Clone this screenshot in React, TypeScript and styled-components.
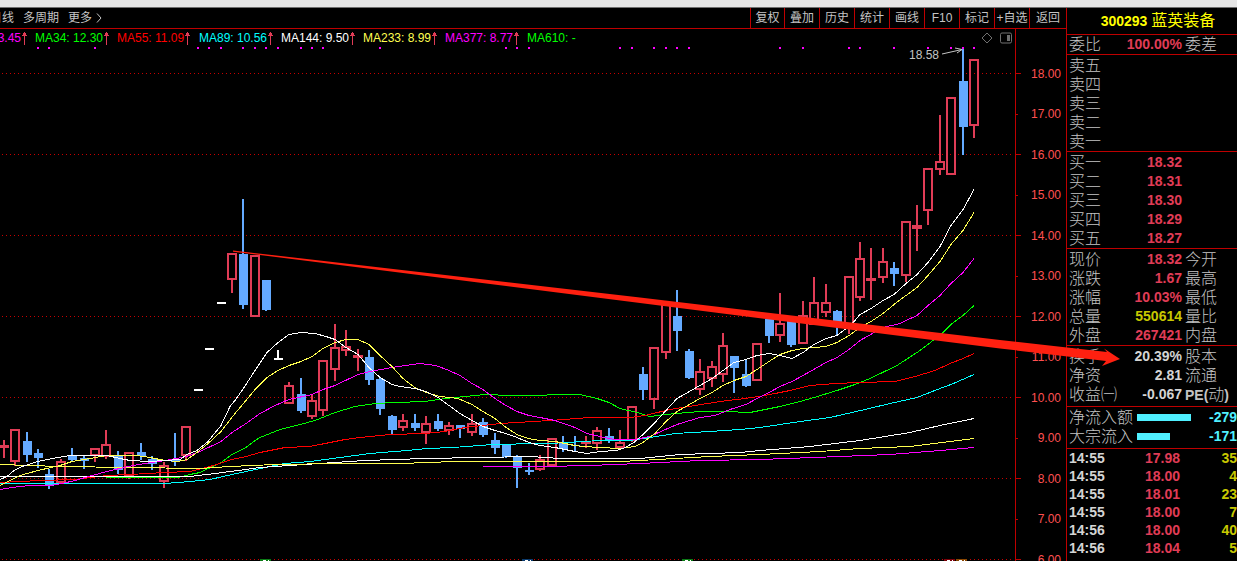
import React from "react";
import styled, { createGlobalStyle } from "styled-components";

const LINE = "#be0000";
const UP = "#e03c56";
const DOWN = "#64aaff";
const LABEL = "#c4c4c4";

const GlobalStyle = createGlobalStyle`
  *, *::before, *::after { box-sizing: border-box; }
  body {
    margin: 0;
    background: #000;
    font-family: "Liberation Sans", "Noto Sans CJK SC", sans-serif;
  }
`;

const Page = styled.div`
  position: relative;
  display: flex;
  flex-direction: column;
  height: 100vh;
  overflow: hidden;
  background: #000;
  color: ${LABEL};
`;

const TitleStrip = styled.div`
  flex: none;
  height: 8px;
  background: #e6e6e6;
  border-bottom: 1px solid #707070;
`;

const Workspace = styled.div`
  flex: 1;
  display: flex;
  min-height: 0;
`;

const ChartArea = styled.main`
  flex: 1;
  min-width: 0;
  display: flex;
  flex-direction: column;
`;

const Toolbar = styled.header`
  flex: none;
  display: flex;
  justify-content: space-between;
  height: 21px;
  border-bottom: 1px solid ${LINE};
  overflow: hidden;
`;

const Periods = styled.nav`
  display: flex;
  align-items: center;
  gap: 9px;
  margin-left: -10px;
`;

const PeriodButton = styled.button`
  display: flex;
  align-items: center;
  gap: 4px;
  padding: 0;
  border: 0;
  background: none;
  color: ${LABEL};
  font: 12px/20px "Liberation Sans", "Noto Sans CJK SC", sans-serif;
  white-space: nowrap;
`;

const Tools = styled.div`
  display: flex;
`;

const ToolButton = styled.button`
  width: 35px;
  padding: 0;
  border: 0;
  border-left: 1px solid ${LINE};
  background: none;
  color: ${LABEL};
  font: 12px/20px "Liberation Sans", "Noto Sans CJK SC", sans-serif;
  white-space: nowrap;

  &:first-child { width: 34px; }
  &:last-child { width: 37px; }
`;

const ChartBody = styled.div`
  flex: 1;
  display: flex;
  min-height: 0;
`;

const Plot = styled.section`
  flex: 1;
  min-width: 0;
  display: flex;
  flex-direction: column;
  overflow: hidden;
`;

const LegendBar = styled.div`
  flex: none;
  display: flex;
  align-items: center;
  justify-content: space-between;
  height: 17px;
  padding-right: 3px;
`;

const Legend = styled.ul`
  display: grid;
  grid-auto-flow: column;
  grid-auto-columns: 82px;
  margin: 0 0 0 -47px;
  padding: 2px 0 0;
  list-style: none;
`;

const LegendItem = styled.li<{ $color: string }>`
  display: flex;
  align-items: center;
  gap: 1px;
  color: ${(p) => p.$color};
  font-size: 12px;
  line-height: 15px;
  white-space: nowrap;
`;

const ViewIcons = styled.div`
  display: flex;
  align-items: center;
  gap: 7px;
`;

const Candles = styled.svg`
  flex: none;
  display: block;
  width: 100%;
  height: 515px;
`;

const Axis = styled.ol`
  flex: none;
  width: 51px;
  margin: 0;
  padding: 24px 5px 0 0;
  border-left: 1px solid ${LINE};
  list-style: none;
  overflow: hidden;
`;

const AxisStep = styled.li<{ $major: boolean }>`
  display: flex;
  align-items: center;
  justify-content: space-between;
  height: ${(p) => (p.$major ? 41 : 40)}px;
  color: #ff5050;
  font-size: 12px;
  line-height: 16px;

  &::before {
    content: "";
    width: ${(p) => (p.$major ? 5 : 2)}px;
    height: 1px;
    background: ${LINE};
  }
`;

const SidePanel = styled.aside`
  flex: none;
  width: 171px;
  border-left: 1px solid ${LINE};
  overflow: hidden;
`;

const StockTitle = styled.h1`
  display: flex;
  align-items: baseline;
  justify-content: center;
  gap: 4px;
  height: 27px;
  margin: 0;
  padding-left: 12px;
  border-bottom: 1px solid ${LINE};
  color: #ffff00;
  font-size: 16px;
  font-weight: 400;
  line-height: 26px;
`;

const StockCode = styled.span`
  font-size: 14px;
  font-weight: 700;
`;

const Section = styled.section<{ $top?: number; $bottom?: number }>`
  padding: ${(p) => p.$top ?? 1}px 0 ${(p) => p.$bottom ?? 0}px 2px;
  border-bottom: 1px solid ${LINE};

  &:last-child { border-bottom: 0; }
`;

const DataTable = styled.table`
  width: 100%;
  table-layout: fixed;
  border-collapse: collapse;
`;

const Row = styled.tr<{ $height?: number }>`
  height: ${(p) => p.$height ?? 19}px;
  line-height: ${(p) => p.$height ?? 19}px;
`;

const NameCell = styled.th<{ $width?: number }>`
  width: ${(p) => (p.$width ? `${p.$width}px` : "auto")};
  padding: 0;
  font-size: 16px;
  font-weight: 300;
  text-align: left;
  white-space: nowrap;
`;

const ValueCell = styled.td<{ $color: string; $width?: number; $align?: string }>`
  width: ${(p) => (p.$width ? `${p.$width}px` : "auto")};
  padding: 0;
  color: ${(p) => p.$color};
  font-size: 14px;
  font-weight: 700;
  text-align: ${(p) => p.$align ?? "right"};
  white-space: nowrap;
`;

const PairCell = styled(NameCell)`
  padding-left: 3px;
`;

const Latin = styled.span`
  font-size: 14px;
  font-weight: 700;
  line-height: 14px;
`;

const BarCell = styled.td`
  padding: 0;
`;

const FlowBar = styled.div`
  height: 7px;
  background: #50f0ff;
`;

const Annotation = styled.svg`
  position: absolute;
  top: 0;
  right: 0;
  width: 1237px;
  height: 561px;
  pointer-events: none;
`;

/* centre x, direction, high, body top, body bottom, low */
type Candle = [number, "u" | "d", number, number, number, number];

const candles: Candle[] = [
  [4, "u", 440, 445, 448, 458], [15, "u", 429, 429, 462, 466], [27, "d", 432, 441, 455, 462],
  [38, "d", 449, 453, 458, 468], [49, "d", 469, 474, 486, 489], [61, "u", 459, 461, 483, 483],
  [72, "d", 448, 456, 460, 462], [84, "d", 456, 458, 461, 469], [95, "u", 448, 448, 456, 462],
  [106, "u", 430, 444, 457, 459], [118, "d", 451, 456, 470, 474], [129, "u", 452, 452, 476, 479],
  [141, "d", 443, 452, 456, 460], [152, "d", 456, 459, 464, 470], [164, "u", 462, 465, 482, 488],
  [175, "d", 433, 460, 462, 466], [186, "u", 426, 426, 456, 461], [232, "u", 253, 253, 280, 293],
  [243, "d", 199, 254, 305, 309], [255, "u", 255, 255, 317, 317], [266, "d", 280, 280, 310, 311],
  [289, "u", 382, 385, 404, 404], [301, "d", 378, 394, 411, 413], [312, "u", 394, 400, 417, 419],
  [323, "u", 360, 360, 411, 416], [335, "u", 324, 347, 370, 381], [346, "u", 330, 346, 351, 356],
  [358, "u", 349, 355, 358, 371], [369, "d", 350, 357, 380, 385], [380, "d", 377, 379, 409, 415],
  [392, "d", 415, 416, 430, 434], [403, "u", 414, 420, 428, 431], [415, "d", 414, 423, 428, 431],
  [426, "u", 416, 423, 433, 444], [438, "d", 414, 421, 429, 431], [449, "u", 422, 425, 431, 435],
  [460, "d", 425, 425, 429, 438], [472, "u", 414, 423, 433, 436], [483, "d", 418, 422, 435, 437],
  [495, "d", 433, 440, 448, 454], [506, "d", 444, 444, 457, 458], [517, "d", 455, 456, 468, 488],
  [529, "d", 463, 470, 472, 475], [540, "u", 455, 459, 470, 471], [552, "u", 438, 438, 466, 466],
  [563, "d", 436, 442, 449, 452], [575, "d", 436, 445, 446, 451], [586, "u", 436, 441, 444, 448],
  [597, "u", 427, 430, 444, 450], [609, "d", 428, 436, 440, 443], [620, "u", 430, 442, 448, 449],
  [632, "u", 406, 406, 441, 442], [643, "d", 367, 374, 390, 400], [654, "u", 347, 347, 400, 409],
  [666, "u", 304, 304, 353, 359], [677, "d", 290, 316, 331, 351], [689, "d", 349, 351, 378, 379],
  [700, "u", 359, 371, 390, 395], [712, "u", 361, 366, 379, 387], [723, "u", 333, 345, 375, 382],
  [734, "d", 356, 356, 368, 393], [746, "d", 359, 374, 386, 387], [757, "u", 343, 343, 381, 381],
  [769, "d", 319, 319, 336, 343], [780, "u", 293, 323, 336, 342], [791, "d", 320, 320, 345, 347],
  [803, "u", 301, 315, 344, 344], [814, "u", 277, 302, 325, 325], [826, "u", 284, 302, 313, 317],
  [837, "d", 310, 311, 324, 335], [849, "u", 276, 276, 328, 334], [860, "u", 242, 258, 298, 301],
  [871, "u", 248, 278, 281, 300], [883, "u", 248, 261, 278, 283], [894, "d", 262, 268, 274, 286],
  [906, "u", 221, 221, 276, 282], [917, "u", 205, 225, 229, 251], [928, "u", 168, 168, 211, 225],
  [940, "u", 115, 161, 170, 175], [951, "u", 97, 97, 175, 175], [963, "d", 49, 81, 127, 155],
  [974, "u", 59, 59, 126, 138],
];

const averages: { color: string; points: string }[] = [
  { color: "#00ff00", points: "20,476 50,476 160,477 178,477 190,474 200,472 221,462 232,454 246,447 255,440 260,437 280,429 300,424 315,420 335,412 355,406 375,403 395,402 425,401 445,398 465,396 485,394 510,395 540,395 555,394 580,394 597,398 609,402 620,408 637,412 650,416 665,414 700,411 725,411 750,412 760,410 780,406 800,401 814,397 837,390 855,384 870,378 897,365 920,350 942,333 951,324 963,315 974,305" },
  { color: "#ff0000", points: "0,482 40,480 75,479 107,475 130,474 165,472 190,471 210,466 232,459 246,456 260,452 285,447 310,446 325,443 345,439 360,437 390,434 425,433 445,431 465,427 500,423 550,420 590,417 630,417 645,415 670,409 695,405 720,401 745,398 765,395 790,390 810,385 835,383 860,382 895,381 915,376 935,370 950,363 963,358 974,353" },
  { color: "#00ffff", points: "0,483 165,483 190,481 210,479 232,474 260,468 285,463 310,461 340,457 370,453 407,450 427,448 453,447 493,444 540,443 550,443 600,440 630,440 650,437 675,433 710,431 740,429 760,427 800,421 830,417 865,409 890,403 917,397 940,388 951,384 974,374" },
  { color: "#ffffff", points: "0,476 190,476 215,473 230,471 246,469 260,467 320,463 365,460 425,458 480,457 530,456 560,458 640,458 680,454 740,452 760,450 810,446 860,440 910,432 940,425 974,418" },
  { color: "#ffff50", points: "0,464 60,466 130,467 200,468 230,466 275,464 340,463 400,463 455,461 530,461 620,461 640,460 710,456 760,454 820,451 860,448 910,446 974,438" },
  { color: "#ff00ff", points: "483,466 545,466 590,465 640,463 700,460 760,459 840,456 890,454 940,450 974,447" },
  { color: "#ff00ff", points: "0,489 12,487 30,485 50,485 62,483 75,480 92,475 107,471 128,466 145,463 165,460 187,456 200,451 221,441 232,432 246,423 260,413 275,405 289,399 312,394 323,389 335,385 358,374 370,371 392,367 420,363 436,365 449,370 460,375 472,383 483,389 495,398 506,405 517,411 529,415 540,417 555,420 575,427 587,433 600,436 614,439 635,439 650,436 663,430 677,424 690,420 700,417 715,415 730,409 746,404 757,398 769,392 780,386 792,381 803,375 826,362 837,357 849,349 860,340 883,327 900,323 906,320 917,315 928,305 940,295 951,283 963,272 974,258" },
  { color: "#ffff50", points: "0,485 10,480 20,475 38,470 60,465 72,461 90,458 107,455 137,455 150,457 165,460 178,461 187,459 197,452 208,443 221,431 235,413 246,400 255,389 267,377 278,370 289,365 301,361 312,356 323,348 335,342 346,339 358,339 369,344 380,355 392,366 403,378 415,387 426,392 440,396 458,398 472,404 483,411 495,418 506,427 517,434 528,438 540,440 555,441 575,445 583,446 600,447 620,448 635,446 643,442 655,433 666,421 677,411 700,398 712,392 723,385 734,380 746,376 757,369 769,361 780,354 792,350 803,348 814,347 826,346 837,342 849,335 860,327 871,321 883,313 894,304 906,295 917,287 928,275 940,261 951,244 963,230 974,212" },
  { color: "#ffffff", points: "0,479 7,476 14,470 22,466 38,461 52,458 70,455 107,455 120,458 130,460 150,461 165,460 180,459 187,454 197,450 208,441 221,425 230,406 235,400 244,387 255,370 267,352 278,342 289,334 301,332 315,333 326,336 335,339 346,347 358,354 369,367 380,377 392,384 400,386 415,388 426,391 438,397 449,405 460,413 472,420 483,426 495,430 506,433 517,437 529,442 540,445 555,447 575,451 587,453 600,451 617,450 625,447 634,442 643,434 655,422 666,410 677,398 700,385 712,378 723,370 734,362 746,359 757,355 769,353 780,355 792,358 803,352 814,344 826,338 837,335 845,329 855,320 860,314 871,308 883,300 894,294 906,283 917,274 928,262 940,246 951,225 963,209 974,189" },
];

const signalDots = [
  38, 49, 95, 198, 209, 221, 243, 255, 266, 278, 301, 312, 323, 380, 506, 517, 529, 620, 632,
  654, 666, 677, 689, 780, 803, 849, 860, 894, 928, 951, 963, 974,
];

const gridLines = [73, 154, 235, 316, 397, 478, 559];

const flatBars = [
  [194, 389],
  [205, 348],
  [217, 302],
  [274, 358],
];

const eventFlags = [
  { x: 260, color: "#0a7a14" },
  { x: 522, color: "#0a3a6c" },
  { x: 682, color: "#0a7a14" },
  { x: 944, color: "#7c0008" },
  { x: 956, color: "#8a4600" },
];

const legend = [
  { text: "MA21: 13.45", color: "#ff00ff", rising: true },
  { text: "MA34: 12.30", color: "#00ff00", rising: true },
  { text: "MA55: 11.09", color: "#ff0000", rising: true },
  { text: "MA89: 10.56", color: "#00ffff", rising: true },
  { text: "MA144: 9.50", color: "#ffffff", rising: true },
  { text: "MA233: 8.99", color: "#ffff50", rising: true },
  { text: "MA377: 8.77", color: "#ff00ff", rising: true },
  { text: "MA610: -", color: "#00ff00", rising: false },
];

const tools = ["复权", "叠加", "历史", "统计", "画线", "F10", "标记", "+自选", "返回"];

const prices = [
  "18.00", "17.00", "16.00", "15.00", "14.00", "13.00", "12.00",
  "11.00", "10.00", "9.00", "8.00", "7.00", "6.00",
];

type Quote = { name: string; value?: string; color?: string; pair?: React.ReactNode };

const committee: Quote[] = [{ name: "委比", value: "100.00%", pair: "委差" }];
const asks: Quote[] = ["卖五", "卖四", "卖三", "卖二", "卖一"].map((name) => ({ name }));
const bids: Quote[] = [
  { name: "买一", value: "18.32" },
  { name: "买二", value: "18.31" },
  { name: "买三", value: "18.30" },
  { name: "买四", value: "18.29" },
  { name: "买五", value: "18.27" },
];
const session: Quote[] = [
  { name: "现价", value: "18.32", pair: "今开" },
  { name: "涨跌", value: "1.67", pair: "最高" },
  { name: "涨幅", value: "10.03%", pair: "最低" },
  { name: "总量", value: "550614", pair: "量比", color: "#c8c800" },
  { name: "外盘", value: "267421", pair: "内盘" },
];
const fundamentals: Quote[] = [
  { name: "换手", value: "20.39%", pair: "股本", color: "#d4d4d4" },
  { name: "净资", value: "2.81", pair: "流通", color: "#d4d4d4" },
  {
    name: "收益㈠",
    value: "-0.067",
    pair: <><Latin>PE(</Latin>动<Latin>)</Latin></>,
    color: "#d4d4d4",
  },
];
const flows = [
  { name: "净流入额", size: 54, value: "-279" },
  { name: "大宗流入", size: 33, value: "-171" },
];
const trades = [
  ["14:55", "17.98", "35"],
  ["14:55", "18.00", "4"],
  ["14:55", "18.01", "23"],
  ["14:55", "18.00", "7"],
  ["14:56", "18.00", "40"],
  ["14:56", "18.04", "5"],
];

function QuoteTable({ rows }: { rows: Quote[] }) {
  return (
    <DataTable>
      <tbody>
        {rows.map((row) => (
          <Row key={row.name}>
            <NameCell scope="row" $width={52}>{row.name}</NameCell>
            <ValueCell $color={row.color ?? UP} $width={61}>{row.value}</ValueCell>
            <PairCell scope="row">{row.pair}</PairCell>
          </Row>
        ))}
      </tbody>
    </DataTable>
  );
}

function RisingArrow() {
  return (
    <svg width="5" height="13" viewBox="0 0 5 13" shapeRendering="crispEdges" aria-hidden="true">
      <path d="M2 0h1v13h-1z M1 1h3v2h-3z M0 3h5v1h-5z" fill={UP} />
    </svg>
  );
}

function CandleShape({ candle }: { candle: Candle }) {
  const [x, direction, high, top, bottom, low] = candle;
  const color = direction === "u" ? UP : DOWN;
  const hollow = direction === "u" && bottom - top > 4;
  return (
    <g fill={color}>
      {high < top && <rect x={x - 1} y={high} width="2" height={top - high} />}
      {low > bottom && <rect x={x - 1} y={bottom} width="2" height={low - bottom} />}
      {hollow ? (
        <rect x={x - 4} y={top + 1} width="8" height={bottom - top - 2} fill="none" stroke={color} strokeWidth="2" />
      ) : (
        <rect x={direction === "u" ? x - 5 : x - 4} y={top} width={direction === "u" ? 10 : 9} height={bottom - top} />
      )}
    </g>
  );
}

function PriceChart() {
  return (
    <Candles viewBox="0 46 1015 515" preserveAspectRatio="xMaxYMin meet" role="img" aria-label="K线图">
      <g shapeRendering="crispEdges">
        {gridLines.map((y) => (
          <line key={y} x1="2" x2="1012" y1={y + 0.5} y2={y + 0.5} stroke="#c80000" strokeDasharray="1 3" />
        ))}
        {candles.map((candle) => (
          <CandleShape key={candle[0]} candle={candle} />
        ))}
        {flatBars.map(([x, y]) => (
          <rect key={x} x={x} y={y} width="9" height="2" fill="#fff" />
        ))}
        <rect x="277" y="350" width="2" height="8" fill="#fff" />
        <g transform="translate(0 0.5)">
          {averages.map((line) => (
            <polyline key={line.points} points={line.points} fill="none" stroke={line.color} strokeWidth="1" />
          ))}
        </g>
        {signalDots.map((x) => (
          <rect key={x} x={x - 1} y="47" width="2" height="2" fill="#ff00ff" />
        ))}
        {eventFlags.map((flag) => (
          <g key={flag.x}>
            <rect x={flag.x} y="559" width="11" height="2" fill={flag.color} />
            <path d={`M${flag.x + 3} 560h3v1h-3z M${flag.x + 8} 560h1v1h-1z`} fill="#fff" />
          </g>
        ))}
      </g>
      <text x="909" y="59" fill={LABEL} fontSize="12">18.58</text>
      <path d="M942 54 L962 49.5 M955 48 L962 49.5 L957 53" fill="none" stroke={LABEL} strokeWidth="1" />
    </Candles>
  );
}

export default function App() {
  return (
    <Page>
      <GlobalStyle />
      <TitleStrip />
      <Workspace>
        <ChartArea>
          <Toolbar>
            <Periods>
              <PeriodButton type="button">日线</PeriodButton>
              <PeriodButton type="button">多周期</PeriodButton>
              <PeriodButton type="button">
                更多
                <svg width="6" height="10" viewBox="0 0 6 10" aria-hidden="true">
                  <path d="M1 0.5 L5 5 L1 9.5" fill="none" stroke={LABEL} />
                </svg>
              </PeriodButton>
            </Periods>
            <Tools>
              {tools.map((tool) => (
                <ToolButton type="button" key={tool}>{tool}</ToolButton>
              ))}
            </Tools>
          </Toolbar>
          <ChartBody>
            <Plot>
              <LegendBar>
                <Legend>
                  {legend.map((item) => (
                    <LegendItem key={item.text} $color={item.color}>
                      {item.text}
                      {item.rising && <RisingArrow />}
                    </LegendItem>
                  ))}
                </Legend>
                <ViewIcons>
                  <svg width="12" height="12" viewBox="0 0 12 12" aria-hidden="true">
                    <path d="M6 1 L11 6 L6 11 L1 6 Z" fill="none" stroke="#707070" />
                  </svg>
                  <svg width="12" height="12" viewBox="0 0 12 12" aria-hidden="true">
                    <rect x="0.5" y="1" width="11" height="10" rx="1.5" fill="none" stroke="#707070" />
                    <rect x="7" y="3" width="3" height="6" fill="#707070" />
                  </svg>
                </ViewIcons>
              </LegendBar>
              <PriceChart />
            </Plot>
            <Axis>
              {prices.map((price, index) => (
                <AxisStep key={price} $major={index % 2 === 0}>{price}</AxisStep>
              ))}
            </Axis>
          </ChartBody>
        </ChartArea>
        <SidePanel>
          <StockTitle>
            <StockCode>300293</StockCode>
            蓝英装备
          </StockTitle>
          <Section $top={0}><QuoteTable rows={committee} /></Section>
          <Section><QuoteTable rows={asks} /></Section>
          <Section><QuoteTable rows={bids} /></Section>
          <Section><QuoteTable rows={session} /></Section>
          <Section $bottom={2}><QuoteTable rows={fundamentals} /></Section>
          <Section $bottom={2}>
            <DataTable>
              <tbody>
                {flows.map((flow) => (
                  <Row key={flow.name}>
                    <NameCell scope="row" $width={68}>{flow.name}</NameCell>
                    <BarCell><FlowBar style={{ width: flow.size }} /></BarCell>
                    <ValueCell $color="#50f0ff" $width={34}>{flow.value}</ValueCell>
                  </Row>
                ))}
              </tbody>
            </DataTable>
          </Section>
          <Section $top={0}>
            <DataTable>
              <tbody>
                {trades.map(([time, price, volume], index) => (
                  <Row key={index} $height={18}>
                    <ValueCell $color="#d4d4d4" $width={52} $align="left">{time}</ValueCell>
                    <ValueCell $color={UP} $width={59}>{price}</ValueCell>
                    <ValueCell $color="#c8c800">{volume}</ValueCell>
                  </Row>
                ))}
              </tbody>
            </DataTable>
          </Section>
        </SidePanel>
      </Workspace>
      <Annotation viewBox="0 0 1237 561" aria-hidden="true">
        <path
          d="M233 250.5 L640 297.5 L1000 340 L1107 352 L1104 348.5 L1120 359 L1102 366 L1106 361 L1000 348.5 L640 303 L300 260 L233 251.8 Z"
          fill="#ff2010"
        />
      </Annotation>
    </Page>
  );
}
